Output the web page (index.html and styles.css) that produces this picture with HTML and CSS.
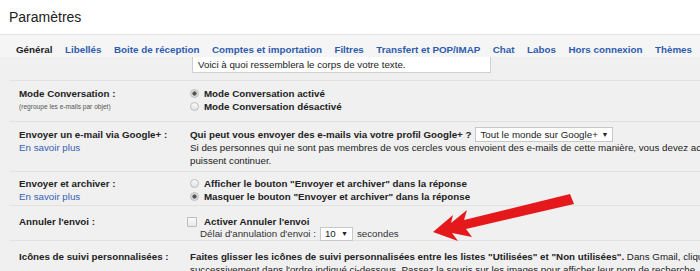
FILE: index.html
```html
<!DOCTYPE html>
<html lang="fr">
<head>
  <meta charset="UTF-8">
  <meta name="viewport" content="width=device-width, initial-scale=1.0">
  <title>Paramètres</title>
  <link rel="stylesheet" href="styles.css">
</head>
<body>
  <div class="header">Paramètres</div>

  <div class="tabs">
    <span class="tab active">Général</span>
    <span class="tab">Libellés</span>
    <span class="tab">Boite de réception</span>
    <span class="tab">Comptes et importation</span>
    <span class="tab">Filtres</span>
    <span class="tab">Transfert et POP/IMAP</span>
    <span class="tab">Chat</span>
    <span class="tab">Labos</span>
    <span class="tab">Hors connexion</span>
    <span class="tab">Thèmes</span>
  </div>

  <div class="panel">
    <div class="row row-preview">
      <div class="label"></div>
      <div class="value">
        <div class="preview">Voici à quoi ressemblera le corps de votre texte.</div>
      </div>
    </div>

    <div class="row row-conv">
      <div class="label">
        <b>Mode Conversation :</b>
        <div class="hint">(regroupe les e-mails par objet)</div>
      </div>
      <div class="value">
        <div class="option"><span class="radio checked"></span><b>Mode Conversation activé</b></div>
        <div class="option"><span class="radio"></span><b>Mode Conversation désactivé</b></div>
      </div>
    </div>

    <div class="row row-gplus">
      <div class="label">
        <b>Envoyer un e-mail via Google+ :</b>
        <div><a class="link">En savoir plus</a></div>
      </div>
      <div class="value">
        <div class="line">
          <b>Qui peut vous envoyer des e-mails via votre profil Google+ ?</b>
          <span class="select wide">Tout le monde sur Google+ <span class="caret">▼</span></span>
        </div>
        <div>Si des personnes qui ne sont pas membres de vos cercles vous envoient des e-mails de cette manière, vous devez accepter leur invitation pour qu'ils</div>
        <div>puissent continuer.</div>
      </div>
    </div>

    <div class="row row-archive">
      <div class="label">
        <b>Envoyer et archiver :</b>
        <div><a class="link">En savoir plus</a></div>
      </div>
      <div class="value">
        <div class="option"><span class="radio"></span><b>Afficher le bouton "Envoyer et archiver" dans la réponse</b></div>
        <div class="option"><span class="radio checked"></span><b>Masquer le bouton "Envoyer et archiver" dans la réponse</b></div>
      </div>
    </div>

    <div class="row row-undo">
      <div class="label"><b>Annuler l'envoi :</b></div>
      <div class="value">
        <div class="option check-line"><span class="checkbox"></span><b>Activer Annuler l'envoi</b></div>
        <div class="line delay">
          Délai d'annulation d'envoi :
          <span class="select small">10 <span class="caret">▼</span></span>
          secondes
        </div>
      </div>
    </div>

    <div class="row row-stars">
      <div class="label"><b>Icônes de suivi personnalisées :</b></div>
      <div class="value">
        <div><b>Faites glisser les icônes de suivi personnalisées entre les listes "Utilisées" et "Non utilisées".</b> Dans Gmail, cliquez successivement sur l'icône de suivi pour les faire défiler</div>
        <div>successivement dans l'ordre indiqué ci-dessous. Passez la souris sur les images pour afficher leur nom de recherche.</div>
      </div>
    </div>
  </div>

  <svg class="arrow" viewBox="0 0 700 271" width="700" height="271">
    <polygon fill="#e5191c" points="433,232 453,215 451,223 467,210 464,220 570,194 574,204 466,229 472,237 452,233 458,241"/>
  </svg>
</body>
</html>
```

FILE: styles.css
```css
html, body {
  overflow: hidden;
}

body {
  margin: 0;
  width: 700px;
  height: 271px;
  position: relative;
  background-color: #f0f0f0;
  font-family: "Liberation Sans", Arial, sans-serif;
  font-size: 9.75px;
  color: #222;
}

b {
  font-weight: bold;
}

.header {
  height: 34px;
  line-height: 34px;
  padding-left: 9px;
  font-size: 14px;
  background-color: #fff;
  border-bottom: 1px solid #e2e2e2;
}

.tabs {
  display: flex;
  gap: 12.5px;
  padding: 8px 0 1px 16px;
  line-height: 13px;
  font-size: 9.8px;
  background-color: #f5f5f5;
  white-space: nowrap;
}

.tab {
  font-weight: bold;
  color: #2d5cae;
}

.tab.active {
  color: #222;
}

.panel {
  margin-left: 10px;
}

.row {
  display: grid;
  grid-template-columns: 171px 1fr;
  padding-left: 9px;
  border-top: 1px solid #e1e1e1;
  line-height: 13px;
  white-space: nowrap;
}

.value {
  min-width: 0;
}

.row-preview {
  height: 23px;
  border-top: none;
}

.preview {
  width: 292px;
  height: 14px;
  margin-left: 2px;
  padding: 1px 0 0 5px;
  background-color: #fff;
  border: 1px solid #cfcfcf;
  border-top: none;
  line-height: 13px;
}

.row-conv {
  padding-top: 6px;
  padding-bottom: 8px;
}

.row-gplus {
  padding-top: 6px;
  padding-bottom: 4px;
}

.row-archive {
  padding-top: 5px;
  padding-bottom: 2px;
}

.row-undo {
  padding-top: 10px;
  line-height: 12px;
}

.row-stars {
  padding-top: 9px;
}

.hint {
  font-size: 6.6px;
  color: #555;
}

.link {
  color: #3562b4;
}

.option {
  display: flex;
  align-items: center;
}

.radio {
  width: 7px;
  height: 7px;
  margin-right: 5px;
  border: 1px solid #bdbdbd;
  border-radius: 50%;
  background: linear-gradient(#fafafa, #e2e2e2);
}

.radio.checked {
  background: radial-gradient(circle, #555 0 1.8px, #d8d8d8 2.4px, #f2f2f2 100%);
}

.check-line {
  margin-left: -3px;
}

.checkbox {
  width: 8px;
  height: 8px;
  margin-right: 7px;
  border: 1px solid #bcbcbc;
  border-radius: 1px;
  background: linear-gradient(#fafafa, #e8e8e8);
}

.line {
  display: flex;
  align-items: center;
  height: 13px;
  gap: 4px;
}

.delay {
  height: 12px;
  margin-left: 10px;
  gap: 4px;
  color: #333;
}

.select {
  display: inline-flex;
  align-items: center;
  justify-content: space-between;
  box-sizing: border-box;
  padding: 0 4px;
  background-color: #fff;
  border: 1px solid #c8c8c8;
  color: #222;
}

.select.wide {
  width: 138px;
  height: 15px;
}

.select.small {
  width: 33px;
  height: 14px;
}

.caret {
  font-size: 7px;
  color: #222;
}

.arrow {
  position: absolute;
  top: 0;
  left: 0;
  pointer-events: none;
}
```
